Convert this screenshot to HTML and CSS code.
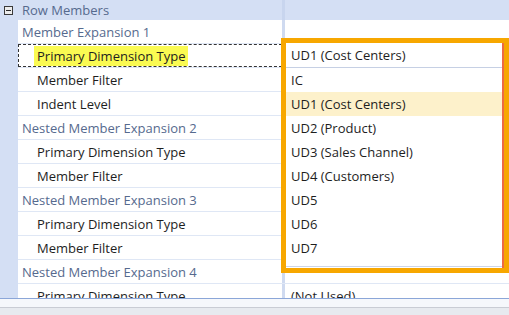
FILE: index.html
```html
<!DOCTYPE html>
<html>
<head>
    <link rel="stylesheet" href="styles.css">
</head>

<body>
<div class="grid">
  <div class="header">
    <div class="gutter-head">
      <svg class="toggle" width="9" height="9" viewBox="0 0 9 9"><rect x="0.5" y="0.5" width="8" height="8" fill="#ececec" stroke="#3a3a3a"/><line x1="2" y1="4.5" x2="7" y2="4.5" stroke="#2a2a2a"/></svg>
    </div>
    <div class="name cat">Row Members</div>
    <div class="split"></div>
    <div class="value"></div>
  </div>

  <div class="body">
    <div class="gutter"></div>
    <div class="rows">
      <div class="row"><div class="name cat">Member Expansion 1</div><div class="split"></div><div class="value"></div></div>
      <div class="row"><div class="name child focus"><span class="hl">Primary Dimension Type</span></div><div class="split"></div><div class="value">UD1 (Cost Centers)</div></div>
      <div class="row"><div class="name child"><span>Member Filter</span></div><div class="split"></div><div class="value"></div></div>
      <div class="row"><div class="name child"><span>Indent Level</span></div><div class="split"></div><div class="value"></div></div>
      <div class="row"><div class="name cat">Nested Member Expansion 2</div><div class="split"></div><div class="value"></div></div>
      <div class="row"><div class="name child"><span>Primary Dimension Type</span></div><div class="split"></div><div class="value"></div></div>
      <div class="row"><div class="name child"><span>Member Filter</span></div><div class="split"></div><div class="value"></div></div>
      <div class="row"><div class="name cat">Nested Member Expansion 3</div><div class="split"></div><div class="value"></div></div>
      <div class="row"><div class="name child"><span>Primary Dimension Type</span></div><div class="split"></div><div class="value"></div></div>
      <div class="row"><div class="name child"><span>Member Filter</span></div><div class="split"></div><div class="value"></div></div>
      <div class="row"><div class="name cat">Nested Member Expansion 4</div><div class="split"></div><div class="value"></div></div>
      <div class="row"><div class="name child"><span>Primary Dimension Type</span></div><div class="split"></div><div class="value">(Not Used)</div></div>
    </div>
  </div>

  <div class="footer"></div>

  <!-- open combo list, drawn over the value column -->
  <div class="dropdown">
    <div class="inner">
      <div class="combo-text">UD1 (Cost Centers)</div>
      <div class="list">
        <div class="item">IC</div>
        <div class="item selected">UD1 (Cost Centers)</div>
        <div class="item">UD2 (Product)</div>
        <div class="item">UD3 (Sales Channel)</div>
        <div class="item">UD4 (Customers)</div>
        <div class="item">UD5</div>
        <div class="item">UD6</div>
        <div class="item">UD7</div>
      </div>
    </div>
  </div>
</div>
</body>
</html>
```

FILE: styles.css
```css
*{
  margin: 0;
  padding: 0;
  box-sizing: border-box;
}
body {
  width: 509px;
  height: 315px;
  overflow: hidden;
  background: #fff;
  font-family: "Open Sans", "Noto Sans", sans-serif;
  font-size: 13px;
  color: #1e1e1e;
}
.grid{
  position: relative;
  height: 315px;
  display: flex;
  flex-direction: column;
}
.header{
  display: flex;
  height: 20px;
  background: #d4dff4;
}
.gutter-head{
  width: 18px;
  display: flex;
  align-items: center;
  justify-content: center;
  padding-right: 1px;
}
.header .name{
  width: 264px;
}
.header .split{
  background: #c8d5ee;
}
.body{
  display: flex;
  height: 278px;
  overflow: hidden;
}
.gutter{
  width: 18px;
  background: #d4dff4;
}
.rows{
  flex: 1;
}
.row{
  display: flex;
  height: 24px;
  border-bottom: 1px solid #dfe7f5;
}
.name{
  width: 264px;
  display: flex;
  align-items: center;
  white-space: nowrap;
  overflow: hidden;
}
.cat{
  padding-left: 4px;
  color: #566a8e;
}
.child{
  padding-left: 16px;
}
.child span{
  padding: 0 3px;
  line-height: 20px;
}
.hl{
  background: #fafa52;
}
.focus{
  outline: 1px dashed #333;
  outline-offset: -1px;
}
.split{
  width: 3px;
  background: #cfdaf0;
}
.value{
  flex: 1;
  display: flex;
  align-items: center;
  padding-left: 6px;
  white-space: nowrap;
  overflow: hidden;
}
.footer{
  flex: 1;
  border-top: 1px solid #8ba6d8;
  background: linear-gradient(#f5f7fb 0 8px, #c9ccd4 8px 9px, #e7eaef 9px);
}
.dropdown{
  position: absolute;
  left: 281px;
  top: 38px;
  width: 228px;
  height: 235px;
  border: 5px solid #f7a700;
  border-right-width: 5px;
  background: #fff;
}
.inner{
  width: 100%;
  height: 100%;
  border-right: 2px solid #ec6a45;
}
.combo-text{
  height: 25px;
  padding-left: 5px;
  display: flex;
  align-items: center;
  border-bottom: 1px solid #c6d0e4;
}
.list{
  padding-bottom: 6px;
  border-bottom: 1px solid #ccd5e8;
}
.item{
  height: 24px;
  padding-left: 5px;
  display: flex;
  align-items: center;
}
.selected{
  background: #fdf1cb;
}
```
